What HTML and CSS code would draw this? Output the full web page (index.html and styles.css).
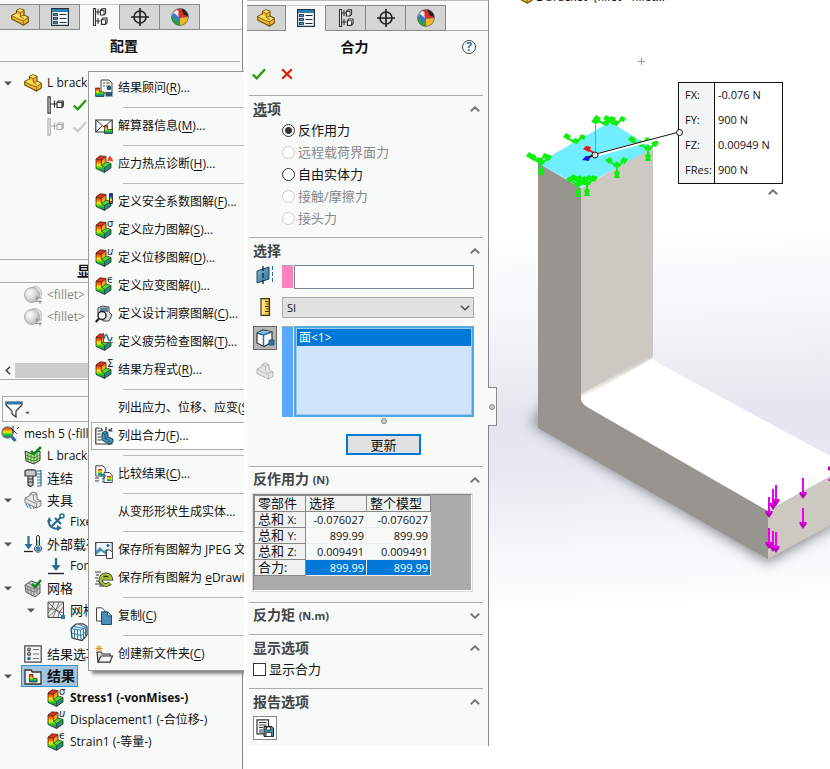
FILE: index.html
```html
<!DOCTYPE html>
<html lang="zh-CN">
<head>
<meta charset="utf-8">
<title>L bracket</title>
<link rel="stylesheet" href="styles.css">
</head>
<body>
<svg class="defs" aria-hidden="true">
  <defs>
    <linearGradient id="rain" x1="0" y1="0" x2="0" y2="1">
      <stop offset="0" stop-color="#f01010"/><stop offset=".25" stop-color="#ff7a00"/><stop offset=".45" stop-color="#f8f000"/><stop offset=".7" stop-color="#18c820"/><stop offset="1" stop-color="#1060e0"/>
    </linearGradient>
    <linearGradient id="warm" x1="0" y1="0" x2="0" y2="1"><stop offset="0" stop-color="#f05010"/><stop offset="1" stop-color="#f8f020"/></linearGradient>
    <linearGradient id="cool" x1="0" y1="0" x2="0" y2="1"><stop offset="0" stop-color="#18b828"/><stop offset="1" stop-color="#1868e0"/></linearGradient>
    <linearGradient id="ruler" x1="0" y1="0" x2="1" y2="0"><stop offset="0" stop-color="#fff3a0"/><stop offset="1" stop-color="#f0b818"/></linearGradient>
    <linearGradient id="plane" x1="0" y1="0" x2="1" y2="1"><stop offset="0" stop-color="#7db7d8"/><stop offset="1" stop-color="#2c7299"/></linearGradient>
    <radialGradient id="ball" cx=".35" cy=".35" r=".7"><stop offset="0" stop-color="#fff"/><stop offset="1" stop-color="#b8b8b8"/></radialGradient>
    <symbol id="part" viewBox="0 0 18 18">
      <path d="M.7 7.500 5.500 5V2.500L9 .7l4 1.600V7l4.300 2.300V14l-5 3.300L8.500 15 .7 11z" fill="#f0bd28" stroke="#6b4a10" stroke-width="1.100" stroke-linejoin="round"/>
      <path d="M5.800 2.600 9 1l3.700 1.500L9.300 4.500zM1.200 7.600 5.500 5.400l3 1.800 4.200.2 4.100 2L12.500 12z" fill="#ffe25e"/>
      <path d="M5.700 2.800 9.300 4.700V8.500l3.500 2M1 7.800l4.500 2.600 3 1.200 3.800 1.200 5-3.200M12.300 12.800V17M9.300 4.700 13 2.600M9.300 8.500 13 7" fill="none" stroke="#80591a" stroke-width=".9"/>
    </symbol>
    <symbol id="props" viewBox="0 0 18 18">
      <rect x=".6" y=".6" width="16.800" height="16.800" fill="#f7f9fa" stroke="#20313c" stroke-width="1.200"/><rect x="1" y="1" width="16" height="3" fill="#2f7fae"/>
      <g fill="#4c91b8" stroke="#20313c" stroke-width=".8"><rect x="2.500" y="5.500" width="4" height="2.200"/><rect x="2.500" y="9.500" width="4" height="2.200"/><rect x="2.500" y="13.500" width="4" height="2.200"/></g>
      <path d="M8.500 6.500h7M8.500 10.500h7M8.500 14.500h7" stroke="#20313c" stroke-width="1.200"/>
    </symbol>
    <symbol id="config" viewBox="0 0 18 18">
      <path d="M2.500.5h2v17h-2zM4.500 4h2.500M4.500 13h2.500M7 1v6M7 10v6M7 4h2.500M7 13h2.500" fill="#fff" stroke="#333" stroke-width="1.100"/>
      <path d="M9.500 2.500 11 .8h3.500v4.500L13 7H9.500zM10.500 11.700 12 10h4v4.500l-1.500 1.800h-4z" fill="#fff" stroke="#333" stroke-width="1.200"/><path d="M9.500 2.500H13V7M10.500 11.700h4v4.600" fill="none" stroke="#333" stroke-width=".9"/>
    </symbol>
    <symbol id="branch" viewBox="0 0 18 18">
      <path d="M1 .8h2.200v16.400H1zM3.200 8h4M7.500 4.500v7M7.500 8H10" fill="none" stroke="currentColor" stroke-width="1.200"/><path d="M10 6.500h5v5h-5zM10 6.500 11.500 5h4.800v4.800L15 11.500" fill="none" stroke="currentColor" stroke-width="1.200"/>
    </symbol>
    <symbol id="target" viewBox="0 0 18 18"><circle cx="9" cy="9" r="6" fill="none" stroke="#222" stroke-width="1.600"/><path d="M9 0v18M0 9h18" stroke="#222" stroke-width="1.700"/></symbol>
    <symbol id="sphere" viewBox="0 0 18 18">
      <circle cx="9" cy="9" r="8.500" fill="#2d7dd0"/><path d="M9 10 2 7 5 1.500 9 .5l8.500 8z" fill="#e03024"/><path d="M2 4.500 6 1.200 8 9 .8 8z" fill="#dfe3e6"/><path d="M10 .6c4 .6 7 3.400 7.400 7.400L13 7z" fill="#222"/><path d="M.6 8 9 10v7.500A8.500 8.500 0 0 1 .6 8z" fill="#28a43a"/><path d="m9 10 8.500-1A8.500 8.500 0 0 1 9 17.500z" fill="#f0b820"/><path d="M.7 8 3 5l6 5-1 4z" fill="#3a79cf"/><circle cx="6" cy="4.500" r="2" fill="#fff" opacity=".6"/><circle cx="9" cy="9" r="8.400" fill="none" stroke="#555" stroke-width=".6"/>
    </symbol>
    <symbol id="fea" viewBox="0 0 18 18">
      <path d="M1 4 6.500 5.200v5.300l3 2v5L1 13.500z" fill="url(#rain)"/>
      <path d="M1 4 5 .8l6 .7-4.500 3.700z" fill="#f02818"/>
      <path d="M6.500 5.200 11 1.500V7l-4.500 3.500z" fill="url(#warm)"/>
      <path d="M6.500 10.500 11 7l5 1.500-6.500 4z" fill="#48e040"/>
      <path d="m9.500 12.500 6.500-4V13l-6.500 4.500z" fill="url(#cool)"/>
      <path d="M1 4 5 .8l6 .7V7l5 1.500V13l-6.500 4.500L1 13.500zM1 4l5.500 1.200L11 1.500M6.500 5.200v5.300l3 2v5M6.500 10.500 11 7M9.500 12.500l6.500-4" fill="none" stroke="#33301c" stroke-width=".8" stroke-linejoin="round"/>
    </symbol>
    <symbol id="fea-bit" viewBox="0 0 9 9"><path d="M.5.5h3v4h5v4h-8z" fill="url(#rain)" stroke="#333" stroke-width=".8"/></symbol>
    <symbol id="tick" viewBox="0 0 14 12"><path d="m.8 6.500 4 3.800L13 1.200" fill="none" stroke="currentColor" stroke-width="2.400"/></symbol>
    <symbol id="up" viewBox="0 0 10 6"><path d="m.8 5.200 4.200-4 4.200 4" fill="none" stroke="currentColor" stroke-width="2"/></symbol>
    <symbol id="down" viewBox="0 0 10 6"><path d="m.8.8 4.200 4 4.200-4" fill="none" stroke="currentColor" stroke-width="2"/></symbol>
    <symbol id="twisty" viewBox="0 0 8 5"><path d="M0 .5h8L4 4.500z" fill="#555"/></symbol>
    <symbol id="fillet" viewBox="0 0 18 18"><circle cx="11" cy="7" r="6.500" fill="#e3e3e3" stroke="#bbb"/><circle cx="8" cy="9" r="7.500" fill="url(#ball)" stroke="#aaa"/><path d="M11 12h7M11 15.500h7M13 10v4M16 14v4" stroke="#999" stroke-width="1.200"/></symbol>
    <symbol id="greymesh" viewBox="0 0 18 18"><path d="M1 6 7 2l9 3v9l-5 4-9-5z" fill="#ccc" stroke="#555"/><path d="m1 6 9 4v7M10 10l6-5M4 4l9 4v7M1 9l9 4 6-4M4 7.500v6.500M7 9v7" fill="none" stroke="#666" stroke-width=".8"/><path d="m8 5 3 3 6-7" fill="none" stroke="#138a20" stroke-width="2.600"/></symbol>
    <symbol id="arrowdown" viewBox="0 0 18 18"><path d="M9 1v9" stroke="#2b6d96" stroke-width="2.400"/><path d="M4.500 8h9L9 14z" fill="#2b6d96"/><path d="M1 16.500h16" stroke="#222" stroke-width="1.400"/></symbol>
    <symbol id="solid" viewBox="0 0 18 18"><path d="M1 7 6 4.500V2.500L9 1l4 1.500V8l4 2v4.500L12.500 17 1 11.500z" fill="#e6e6e6" stroke="currentColor"/><path d="M6 2.800 9.500 4.500V9l3 2 4.500-1M1 7l5 3 6.500 2.500V17M9.500 4.500 13 2.800" fill="none" stroke="currentColor" stroke-width=".8"/></symbol>
    <symbol id="folder" viewBox="0 0 18 18"><path d="M1 3h6l1.500 2H17v12H1z" fill="#f2f2f2" stroke="#333" stroke-width="1.300"/><path d="M5.500 7.500h3.500v4h4v3.500H5.500z" fill="url(#rain)" stroke="#333" stroke-width=".8"/></symbol>
  </defs>
</svg>

<main class="app">
  <aside class="tree-panel">
    <nav class="tabs" aria-label="管理器">
      <button class="tab" aria-label="特征树"><svg class="ico"><use href="#part"/></svg></button>
      <button class="tab" aria-label="属性"><svg class="ico"><use href="#props"/></svg></button>
      <button class="tab active" aria-label="配置"><svg class="ico"><use href="#config"/></svg></button>
      <button class="tab" aria-label="尺寸"><svg class="ico"><use href="#target"/></svg></button>
      <button class="tab" aria-label="外观"><svg class="ico"><use href="#sphere"/></svg></button>
    </nav>
    <h1 class="tree-title">配置</h1>
    <ul class="tree config-tree">
      <li class="row l1"><svg class="twisty"><use href="#twisty"/></svg><svg class="ico"><use href="#part"/></svg><span>L bracket</span></li>
      <li class="row l2"><span class="twisty"></span><svg class="ico dark"><use href="#branch"/></svg><svg class="tick green"><use href="#tick"/></svg></li>
      <li class="row l2"><span class="twisty"></span><svg class="ico pale"><use href="#branch"/></svg><svg class="tick faint"><use href="#tick"/></svg></li>
    </ul>
    <h2 class="state-title">显示状态</h2>
    <ul class="tree state-tree">
      <li class="row l1 muted"><span class="twisty"></span><svg class="ico"><use href="#fillet"/></svg><span>&lt;fillet&gt;</span></li>
      <li class="row l1 muted"><span class="twisty"></span><svg class="ico"><use href="#fillet"/></svg><span>&lt;fillet&gt;</span></li>
    </ul>
    <div class="hscroll"><button class="scroll-left" aria-label="向左"><svg viewBox="0 0 6 9"><path d="M5 .8 1.300 4.500 5 8.200" fill="none" stroke="#444" stroke-width="1.600"/></svg></button><div class="thumb"></div></div>
    <div class="filter">
      <button class="filter-btn" aria-label="过滤"><svg class="ico" viewBox="0 0 18 18"><path d="M1 2h16v3l-6 6v6l-4-3v-3L1 5z" fill="#fff" stroke="#333" stroke-width="1.200"/><path d="M1 2h16v2.500H1z" fill="#2b79a8"/></svg><svg class="drop"><use href="#twisty"/></svg></button>
    </div>
    <ul class="tree study-tree">
      <li class="row l0"><svg class="ico" viewBox="0 0 18 18"><path d="m10 11 4.500 5" stroke="#2b6d96" stroke-width="3"/><circle cx="6.500" cy="7.500" r="5.500" fill="url(#rain)" stroke="#777" stroke-width="1.400"/><path d="M10 3l6 6M12 8V1M16 4l2-2" stroke="#333" stroke-width="1"/></svg><span>mesh 5 (-fillet-)</span></li>
      <li class="row l1"><span class="twisty"></span><svg class="ico" viewBox="0 0 18 18"><path d="m1 4 7 3 8-3v9l-6 4-8-3z" fill="#b8ef9c" stroke="#333"/><path d="M1.500 8 10 11l6-3M1.500 11 10 14l6-3M4 5.500V15M7 7v9M10 7v10M13 5.500V15" fill="none" stroke="#3d7f2a" stroke-width=".9"/><path d="m7 4 3 3 7-7" fill="none" stroke="#138a20" stroke-width="2.600"/></svg><span>L bracket</span></li>
      <li class="row l1"><span class="twisty"></span><svg class="ico" viewBox="0 0 18 18"><path d="M1 2 3 .8h7L12 2v5H1zM4 7h5v9l-2.500 1.500L4 16z" fill="#c9c9c9" stroke="#333" stroke-width="1.200"/><path d="M4 10h5M4 13h5" stroke="#333"/><path d="M13 2h4M13 5h4M13 8h4M13 11h4M13 14h4M13 17h4M17 1v16" stroke="#2b6d96" stroke-width="1.200"/></svg><span class="zh">连结</span></li>
      <li class="row l1"><svg class="twisty"><use href="#twisty"/></svg><svg class="ico grey"><use href="#solid"/><path d="m2 13 2 4M5 14l2 4M9 16l1 2" stroke="#2b6d96"/></svg><span class="zh">夹具</span></li>
      <li class="row l2"><span class="twisty"></span><svg class="ico" viewBox="0 0 18 18"><path d="M5 13 14 4M8 5l6 6M2 7c-1 6 4 10 10 8" fill="none" stroke="#2b6d96" stroke-width="2.200"/><circle cx="15" cy="3" r="2" fill="none" stroke="#2b6d96" stroke-width="1.600"/><path d="M0 9l2-5 3 4zM10 12l5 3-5 3z" fill="#2b6d96"/></svg><span>Fixed-1</span></li>
      <li class="row l1"><svg class="twisty"><use href="#twisty"/></svg><svg class="ico" viewBox="0 0 18 18"><path d="M4.500 1v10" stroke="#2b6d96" stroke-width="2.200"/><path d="M.5 9h8l-4 5.500z" fill="#2b6d96"/><path d="M0 16.500h9" stroke="#222" stroke-width="1.300"/><path d="M12.500 2a1.500 1.500 0 0 1 3 0v8.500a3.500 3.500 0 1 1-3 0z" fill="#fff" stroke="#333"/><circle cx="14" cy="13.800" r="2.500" fill="#3886b5"/><path d="M14 5v8" stroke="#3886b5"/></svg><span class="zh">外部载荷</span></li>
      <li class="row l2"><span class="twisty"></span><svg class="ico"><use href="#arrowdown"/></svg><span>Force-1</span></li>
      <li class="row l1"><svg class="twisty"><use href="#twisty"/></svg><svg class="ico"><use href="#greymesh"/></svg><span class="zh">网格</span></li>
      <li class="row l2"><svg class="twisty"><use href="#twisty"/></svg><svg class="ico" viewBox="0 0 18 18"><path d="M1 1h15.500v15.500H1z" fill="#eee" stroke="#444"/><path d="m1 1 15.500 15.500M16.500 1 1 16.500M1 7l8 2 3-8M9 9l7 3M9 9l-3 7.500M1 12l4-5 2-6M16 6l-4 6-1 4" fill="none" stroke="#555" stroke-width=".8"/><path d="M14 14h4v4h-4z" fill="#2b79a8"/></svg><span class="zh">网格控制</span></li>
      <li class="row l3"><span class="twisty"></span><svg class="ico" viewBox="0 0 18 18"><path d="M1 5.500 6 1l7-.2 4 2.700V12l-5 5.500L2 15z" fill="#e4f1f8" stroke="#333" stroke-width="1.200"/><path d="m1 5.500 9.500 1.700L17 3.500M10.500 7.200 11 17M1.500 10l9.500 2.500 6-4.500M4.500 6v9.500M7.500 7v9.500M4 3.500l9.500 2v10M8 1l7.500 3.500V14" fill="none" stroke="#3580ab" stroke-width="1"/></svg></li>
      <li class="row l1"><span class="twisty"></span><svg class="ico" viewBox="0 0 18 18"><path d="M.8.8h16.400v16.400H.8z" fill="#f4f4f4" stroke="#444" stroke-width="1.200"/><circle cx="5" cy="4.500" r="1.600" fill="#999" stroke="#555"/><circle cx="5" cy="9" r="1.600" fill="#999" stroke="#555"/><circle cx="5" cy="13.500" r="1.800" fill="#2b6d96"/><path d="M9 4.500h6M9 9h6M9 13.500h6" stroke="#777" stroke-width="1.200"/></svg><span class="zh">结果选项</span></li>
      <li class="row l1"><svg class="twisty"><use href="#twisty"/></svg><span class="selected"><svg class="ico"><use href="#folder"/></svg><b>结果</b></span></li>
      <li class="row l2"><span class="twisty"></span><svg class="ico"><use href="#fea"/><text x="12" y="6" class="sup">σ</text></svg><b>Stress1 (-vonMises-)</b></li>
      <li class="row l2"><span class="twisty"></span><svg class="ico"><use href="#fea"/><text x="12" y="6" class="sup it">u</text></svg><span>Displacement1 (-合位移-)</span></li>
      <li class="row l2"><span class="twisty"></span><svg class="ico"><use href="#fea"/><text x="12" y="6" class="sup">ϵ</text></svg><span>Strain1 (-等量-)</span></li>
    </ul>

    <div class="menu" role="menu">
      <button class="item" role="menuitem"><svg class="ico" viewBox="0 0 18 18"><path d="M6 1h8l3 3v10H6z" fill="#f5f5f5" stroke="#444"/><path d="M8 4h2M11 4h4M8 7h2M11 7h4" stroke="#555"/><path d="M.6 9h4v4H9v4.500H.6z" fill="url(#rain)" stroke="#333" stroke-width=".8"/><circle cx="14" cy="9" r="2.300" fill="#2a5673"/><path d="M10.500 17.500V13h7v4.500z" fill="#2a5673"/></svg><span>结果顾问(<u>R</u>)...</span></button>
      <hr>
      <button class="item" role="menuitem"><svg class="ico" viewBox="0 0 18 18"><path d="M.8 3h16.400v12H.8z" fill="#fff" stroke="#333" stroke-width="1.200"/><path d="m1 3 8 7 8-7M1 15l6-6" fill="none" stroke="#333"/><use href="#fea-bit" x="9" y="8" width="9" height="9"/></svg><span>解算器信息(<u>M</u>)...</span></button>
      <hr>
      <button class="item" role="menuitem"><svg class="ico"><use href="#fea"/><path d="M13 7c-1.500-3 1-4 1.500-6.500 1.500 2 4.500 3.500 3 6.500-1.500-1.500-3-2-4.500 0z" fill="#f04818"/></svg><span>应力热点诊断(<u>H</u>)...</span></button>
      <hr>
      <button class="item" role="menuitem"><svg class="ico"><use href="#fea"/><path d="M14.500.5h3v10h-3z" fill="#1838d0" stroke="#222" stroke-width=".8"/><path d="M15 4h2v2h-2z" fill="#28c838"/><path d="M15 6h2v2h-2z" fill="#f0e010"/><path d="M15 8h2v2h-2z" fill="#e82018"/></svg><span>定义安全系数图解(<u>F</u>)...</span></button>
      <button class="item" role="menuitem"><svg class="ico"><use href="#fea"/><text x="12" y="6" class="sup">σ</text></svg><span>定义应力图解(<u>S</u>)...</span></button>
      <button class="item" role="menuitem"><svg class="ico"><use href="#fea"/><text x="12" y="6" class="sup it">u</text></svg><span>定义位移图解(<u>D</u>)...</span></button>
      <button class="item" role="menuitem"><svg class="ico"><use href="#fea"/><text x="12" y="6" class="sup">ϵ</text></svg><span>定义应变图解(<u>I</u>)...</span></button>
      <button class="item" role="menuitem"><svg class="ico" viewBox="0 0 18 18"><path d="m3 3 4-2 7 1v5l3 3-3 6H8L3 9z" fill="#ddd" stroke="#444"/><path d="M5 2.500h8V7H5z" fill="#5b8199"/><circle cx="7" cy="10.500" r="4" fill="#f5f8fa" stroke="#222" stroke-width="1.500"/><path d="M4 13.500.8 17" stroke="#222" stroke-width="2.200"/></svg><span>定义设计洞察图解(<u>C</u>)...</span></button>
      <button class="item" role="menuitem"><svg class="ico"><use href="#fea"/><path d="M8.500 0H18v9.500H8.500z" fill="#f8faf9"/><path d="M8.500 0v9.500H18" fill="none" stroke="#555"/><path d="M9 6c1-6 3-5 4-1s3 4 4-1" fill="none" stroke="#2b6d96" stroke-width="1.400"/></svg><span>定义疲劳检查图解(<u>T</u>)...</span></button>
      <button class="item" role="menuitem"><svg class="ico"><use href="#fea"/><text x="12" y="6" class="sup">Σ</text></svg><span>结果方程式(<u>R</u>)...</span></button>
      <hr>
      <button class="item" role="menuitem"><span class="ico"></span><span>列出应力、位移、应变(<u>S</u>)...</span></button>
      <button class="item hot" role="menuitem"><svg class="ico" viewBox="0 0 18 18"><path d="M.8 1h4M.8 1v16h16v-3" fill="none" stroke="#333" stroke-width="1.200"/><path d="M2.500 4h4M2.500 7h3M2.500 10h4M2.500 13h4" stroke="#333" stroke-width="1.200"/><path d="m7 6 3-2 3 1.500V10l5 2v3l-4 2.500L7 13z" fill="#4a8fb5" stroke="#1d4a66"/><path d="m7 6 3 1.500v4l4 2V17M10 11.500l3-1.500M10 7.500 13 5.500" fill="none" stroke="#1d4a66" stroke-width=".8"/><path d="m6 1 1.500 3M11 0v3.500M17 1l-2 3M14 4.500l.3-2.500M17.500 4H15" stroke="#222" stroke-width="1.200"/></svg><span>列出合力(<u>F</u>)...</span></button>
      <hr>
      <button class="item" role="menuitem"><svg class="ico" viewBox="0 0 18 18"><path d="M.8.8h7l2.500 2.500V11H.8z" fill="#fff" stroke="#444"/><path d="M9 7.500h5.500L17.200 10v7.500H9z" fill="#fff" stroke="#444"/><path d="M3 4h4v6H3z" fill="url(#rain)"/><path d="M12 11h4v5h-4z" fill="url(#rain)"/><path d="M6 11.500q0-2 2-2t2 1.700q0 1.300-2 2.300v1M8 16v1.500" fill="none" stroke="#2b6d96" stroke-width="1.500"/><path d="M0 13h4M0 16h4" stroke="#333" stroke-width="1.200"/></svg><span>比较结果(<u>C</u>)...</span></button>
      <hr>
      <button class="item" role="menuitem"><span class="ico"></span><span>从变形形状生成实体...</span></button>
      <hr>
      <button class="item" role="menuitem"><svg class="ico" viewBox="0 0 18 18"><path d="M.7 1.500h16.600v13H.7z" fill="#eef5fa" stroke="#444" stroke-width="1.200"/><path d="m1 10 4-4 4 4 3-2 5 3v3H1z" fill="#4b8fb4"/><path d="m1 14 5-4 5 4z" fill="#fff"/><circle cx="13" cy="4.500" r="1.500" fill="#2b6d96"/><path d="M11.500 9H15l2.500 2.500v6h-6z" fill="#fff" stroke="#444"/></svg><span>保存所有图解为 JPEG 文件(<u>J</u>)</span></button>
      <button class="item" role="menuitem"><svg class="ico" viewBox="0 0 18 18"><path d="M0 3h6M1 6h3M0 9h3M1 12h3M0 15h6M4 17h5" stroke="#333" stroke-width="1"/><path d="M7 9.500h9A5.300 5.300 0 1 0 15 14" fill="none" stroke="#333" stroke-width="4"/><path d="M7 9.500h9A5.300 5.300 0 1 0 15 14" fill="none" stroke="#a5c63b" stroke-width="2.400"/></svg><span>保存所有图解为 <u>e</u>Drawings</span></button>
      <hr>
      <button class="item" role="menuitem"><svg class="ico" viewBox="0 0 18 18"><path d="M1.500.8H7l3 3V14H1.500z" fill="#fff" stroke="#444"/><path d="M6.500 4.800h6l4 4v8.700h-10z" fill="#4a8fb5" stroke="#1d4a66"/><path d="M12.500 4.800v4h4z" fill="#cfe4f1" stroke="#1d4a66" stroke-width=".8"/></svg><span>复制(<u>C</u>)</span></button>
      <hr>
      <button class="item" role="menuitem"><svg class="ico" viewBox="0 0 18 18"><path d="M2 7h4l1.500 2H15v8H3z" fill="#ddd" stroke="#333" stroke-width="1.200"/><path d="m3 17 3-6h11.500L15 17z" fill="#f6f6f6" stroke="#333" stroke-width="1.200"/><path d="M4 0v7M.5 3.500h7M1.500 1l5 5M6.500 1l-5 5" stroke="#e09010" stroke-width="1"/></svg><span>创建新文件夹(<u>C</u>)</span></button>
    </div>
  </aside>

  <section class="property">
    <nav class="tabs" aria-label="管理器">
      <button class="tab" aria-label="特征树"><svg class="ico"><use href="#part"/></svg></button>
      <button class="tab active" aria-label="属性"><svg class="ico"><use href="#props"/></svg></button>
      <button class="tab" aria-label="配置"><svg class="ico"><use href="#config"/></svg></button>
      <button class="tab" aria-label="尺寸"><svg class="ico"><use href="#target"/></svg></button>
      <button class="tab" aria-label="外观"><svg class="ico"><use href="#sphere"/></svg></button>
    </nav>
    <header class="prop-head">
      <h1>合力</h1>
      <button class="help" aria-label="帮助">?</button>
    </header>
    <div class="confirm">
      <button aria-label="确定"><svg class="tick green"><use href="#tick"/></svg></button>
      <button aria-label="取消"><svg class="cross" viewBox="0 0 12 12"><path d="m1.200 1.200 9.600 9.600M10.800 1.200 1.200 10.800" stroke="#d81e06" stroke-width="2.200"/></svg></button>
    </div>

    <section class="group options" role="radiogroup" aria-labelledby="options-title">
      <h2 id="options-title"><span><u>选</u>项</span><svg class="chev"><use href="#up"/></svg></h2>
      <label><input type="radio" name="force" checked>反作用力</label>
      <label><input type="radio" name="force" disabled>远程载荷界面力</label>
      <label><input type="radio" name="force">自由实体力</label>
      <label><input type="radio" name="force" disabled>接触/摩擦力</label>
      <label><input type="radio" name="force" disabled>接头力</label>
    </section>

    <section class="group selection">
      <h2><span>选择</span><svg class="chev"><use href="#up"/></svg></h2>
      <div class="field">
        <svg class="ico" viewBox="0 0 18 18"><path d="m1 5 12-4v12L1 17z" fill="url(#plane)" stroke="#1d4a66"/><path d="M7 0v18" stroke="#222" stroke-width="1.300" stroke-dasharray="5 2"/><path d="M16.500 0v18" stroke="#2b6d96" stroke-dasharray="4 2"/></svg>
        <div class="swatched pink"><i></i><input type="text" aria-label="参考基准面"></div>
      </div>
      <div class="field units">
        <svg class="ico" viewBox="0 0 18 18"><path d="M5 .7h8.500v16.600H5z" fill="url(#ruler)" stroke="#40300a" stroke-width="1.200"/><path d="M9 3.500h4M10.500 6h3M9 8.500h4M10.500 11h3M9 13.500h4" stroke="#40300a" stroke-width="1.200"/></svg>
        <div class="dropdown"><select aria-label="单位"><option>SI</option></select><svg class="arrow" viewBox="0 0 10 6"><path d="m.8.8 4.200 4 4.200-4" fill="none" stroke="#444" stroke-width="1.300"/></svg></div>
      </div>
      <div class="field faces">
        <div class="pick">
          <button class="square on" aria-label="面"><svg class="ico" viewBox="0 0 18 18"><path d="m1 4 6-3 9 2v10l-8 4.500L1 14z" fill="#fff" stroke="#333" stroke-width="1.200"/><path d="m1.500 4 5.500-2.500L15.500 3 8 6z" fill="#7cc4e8"/><path d="m1 4 6.500 2L16 3M7.500 6v11" fill="none" stroke="#2b6d96" stroke-width="1.500"/><path d="M13 11h5v5h-5z" fill="#2b79a8" stroke="#1d4a66" stroke-width=".8"/></svg></button>
          <svg class="ico pale solid"><use href="#solid"/></svg>
        </div>
        <div class="swatched blue"><i></i><select size="4" aria-label="面"><option selected>面&lt;1&gt;</option></select></div>
      </div>
      <div class="grip"></div>
      <button class="update">更新</button>
    </section>

    <section class="group reaction">
      <h2><span>反作用力 <small>(N)</small></span><svg class="chev"><use href="#up"/></svg></h2>
      <div class="sheet">
        <table>
          <thead><tr><th>零部件</th><th>选择</th><th>整个模型</th></tr></thead>
          <tbody>
            <tr><th>总和 <small>X:</small></th><td>-0.076027</td><td>-0.076027</td></tr>
            <tr><th>总和 <small>Y:</small></th><td>899.99</td><td>899.99</td></tr>
            <tr><th>总和 <small>Z:</small></th><td>0.009491</td><td>0.009491</td></tr>
            <tr class="sum"><th>合力:</th><td>899.99</td><td>899.99</td></tr>
          </tbody>
        </table>
      </div>
    </section>
    <section class="group moment"><h2><span>反力矩 <small>(N.m)</small></span><svg class="chev"><use href="#down"/></svg></h2></section>
    <section class="group display">
      <h2><span>显示选项</span><svg class="chev"><use href="#up"/></svg></h2>
      <label><input type="checkbox">显示合力</label>
    </section>
    <section class="group report">
      <h2><span>报告选项</span><svg class="chev"><use href="#up"/></svg></h2>
      <button class="square" aria-label="保存报告"><svg class="ico" viewBox="0 0 18 18"><path d="M1 .8h11.500v14H1z" fill="#fff" stroke="#333" stroke-width="1.200"/><path d="M3 3.500h7.500M3 6h7.500M3 8.500h4M3 11h4M3 13h4" stroke="#333"/><path d="M8 7.500h8l1.500 1.500v8.500H8z" fill="#4a8fb5" stroke="#222"/><path d="M10.500 8h4v3h-4zM10 13.500h5.500v4H10z" fill="#fff" stroke="#222" stroke-width=".8"/></svg></button>
    </section>
    <button class="handle" aria-label="折叠面板"><i></i></button>
  </section>

  <section class="viewport">
    <svg class="scene" aria-label="L bracket">
      <defs>
        <filter id="soft" x="-20%" y="-20%" width="140%" height="140%"><feGaussianBlur stdDeviation="7"/></filter>
        <linearGradient id="bend" gradientUnits="userSpaceOnUse" x1="126" y1="374" x2="129" y2="380"><stop offset="0" stop-color="#cdc8c2"/><stop offset="1" stop-color="#fff"/></linearGradient>
        <g id="load"><path d="M0 0v16" stroke="#f000f0" stroke-width="2"/><path d="M-3.500 14h7v2L0 21l-3.500-5z" fill="#b800b8"/><path d="M-2 14h4v2h-4z" fill="#f000f0"/></g>
        <g id="fix" fill="#0af00a" stroke="#0af00a"><path d="m-8-4 8 5 8-5M0 0v11" fill="none" stroke-width="2"/><path d="m-12-5 5-3 3 3-4 4zM11-6l-5-2-3 4 5 3zM-4 1l4-5 4 5-4 2zM-3 8l3-4 3 4-1 2 1 3h-6l1-3z" stroke="none"/></g>
        <g id="fixtop" fill="#0af00a" stroke="#0af00a"><path d="m-8-3 8 4 8-5" fill="none" stroke-width="2"/><path d="m-12-4 3-4 5 3-3 4zM11-5 6-7 4-3l5 2zM-4 1l4-4 5 2-3 4z" stroke="none"/></g>
      </defs>
      <path d="M42 423 279 562 345 525V500L80 380z" fill="#55565c" filter="url(#soft)" opacity=".75"/>
      <path d="M49 163 92 188V399q1 5 6 8l181 103v49L49 428z" fill="#989590"/>
      <path d="M92 188 164 147V357L92 399z" fill="#cdc8c2"/>
      <path d="M92 399 164 356q1 4 5 7L345 458V474L279 511 98 407q-6-4-6-8z" fill="#fff"/>
      <path d="M92 394 164 353v5L92 400z" fill="url(#bend)"/>
      <path d="M279 511 345 474V523L279 559z" fill="#cdc8c2"/>
      <path d="M49 163 121 122 164 148 92 187z" fill="#70edff"/>
      <use href="#fixtop" x="86" y="141"/><use href="#fixtop" x="116" y="123"/><use href="#fixtop" x="126" y="123"/>
      <use href="#fix" x="52" y="162"/><use href="#fix" x="89" y="184"/><use href="#fix" x="98" y="183"/><use href="#fix" x="128" y="165"/><use href="#fix" x="159" y="148"/><use href="#fixtop" x="49" y="160"/><use href="#fixtop" x="151" y="144"/><use href="#fixtop" x="93" y="182"/>
      <path d="M106.500 120v34" stroke="#0af00a"/><path d="m102 122 4.500-6 4.500 6-4 2z" fill="#0af00a"/>
      <path d="M107 154 98 149" stroke="#e11" stroke-width="2"/><path d="m94 149 3-3 5 1-2 5z" fill="#f01010"/>
      <path d="m107 154-9 4" stroke="#222" stroke-width="2"/><path d="m93 160 4-4 4 1-1 4z" fill="#1818e0"/>
      <path d="M107 155 190 133" stroke="#fff" stroke-width="3"/><path d="M107 154 190 132" stroke="#111"/>
      <circle cx="106" cy="155" r="3" fill="#ddd" stroke="#222"/>
      <use href="#load" x="280" y="497"/><use href="#load" x="284" y="489"/><use href="#load" x="287" y="485"/><use href="#load" x="314" y="478"/><use href="#load" x="280" y="528"/><use href="#load" x="284" y="531"/><use href="#load" x="287" y="532"/><use href="#load" x="314" y="508"/>
      <path d="m339 467 3-1v5l-3-1zM339 480l3-2v4z" fill="#c000c0"/>
      <path d="M149 61.500h7M152.500 58v7" stroke="#999"/>
    </svg>
    <p class="crumb"><svg class="ico"><use href="#part"/></svg><span>L bracket&nbsp; (fillet - fillet...</span></p>
    <table class="callout">
      <tr><th>FX:</th><td>-0.076 N</td></tr>
      <tr><th>FY:</th><td>900 N</td></tr>
      <tr><th>FZ:</th><td>0.00949 N</td></tr>
      <tr><th>FRes:</th><td>900 N</td></tr>
    </table>
    <i class="anchor"></i>
    <svg class="chev collapse"><use href="#up"/></svg>
  </section>
</main>
</body>
</html>
```
FILE: styles.css
```css
* { box-sizing: border-box; }
body {
  margin: 0;
  background: #fff;
  color: #111;
  font: 12px/22px "Open Sans", "Noto Sans CJK SC", sans-serif;
}
h1, h2, p, ul { margin: 0; padding: 0; }
ul { list-style: none; }
svg { display: block; overflow: visible; flex: none; }
button { margin: 0; padding: 0; border: 0; background: none; color: inherit; font: inherit; }
.defs { position: absolute; width: 0; height: 0; }
.ico { width: 18px; height: 18px; flex: none; }
.sup { font: 10px "DejaVu Sans", sans-serif; fill: #222; }
.it { font-style: italic; }
.dark { color: #333; }
.pale { color: #b0b0b0; }
.faint { color: #ccc; }
.grey { color: #777; }
.green { color: #2f9a10; }
.tick { width: 14px; height: 12px; }
.chev { width: 10px; height: 6px; color: #777; }

.app {
  display: grid;
  grid-template-columns: 243px 242px 1fr;
  column-gap: 4px;
  min-height: 100vh;
  overflow: hidden;
}

.tabs { display: flex; height: 26px; border-bottom: 1px solid #aaa; }
.tab {
  display: grid;
  place-items: center;
  width: 40px;
  height: 26px;
  border: 1px solid #888;
  border-left: 0;
  background: #d5d5d3;
}
.tab.active { border-color: #ccc #888 #f8faf9; background: #f8faf9; }
.property .tab:first-child { width: 39px; }

.tree-panel {
  position: relative;
  padding-top: 4px;
  border-right: 1px solid #888;
  background: #f8faf9;
}
.tree-title, .state-title { font-size: 14px; }
.tree-title { height: 32px; margin-right: 2px; padding-left: 8px; border-bottom: 1px solid #aaa; line-height: 32px; text-align: center; }
.config-tree { height: 197px; padding-top: 10px; }
.row { display: flex; align-items: center; gap: 5px; height: 22px; white-space: nowrap; }
.l0 { padding-left: 1px; }
.l1 { padding-left: 4px; }
.l2 { padding-left: 27px; }
.l3 { padding-left: 50px; }
.zh { font-size: 13px; }
span.twisty { width: 15px; }
svg.twisty { width: 8px; height: 5px; margin-right: 7px; }
.config-tree .tick { margin-left: 3px; }
.muted { color: #888; }
.state-title { height: 24px; padding-left: 77px; border: solid #aaa; border-width: 1px 0; }
.state-tree { height: 78px; padding-top: 1px; }
.hscroll { display: flex; height: 19px; align-items: center; border-bottom: 1px solid #aaa; }
.scroll-left { display: grid; place-items: center; width: 15px; }
.scroll-left svg { width: 6px; height: 9px; }
.thumb { flex: 1; height: 15px; background: #cdcdcd; }
.filter { display: flex; align-items: center; height: 26px; margin: 16px 0 1px 2px; padding-left: 2px; border: 1px solid #aaa; }
.filter-btn { display: flex; align-items: center; gap: 2px; }
.drop { width: 5px; height: 4px; margin-top: 8px; }
.selected {
  display: flex;
  align-items: center;
  gap: 5px;
  height: 22px;
  margin-left: -3px;
  padding: 0 2px;
  border: 1px solid #3c8ec8;
  background: #a2c4e0;
  font-size: 14px;
}

.menu {
  position: absolute;
  top: 71px;
  left: 88px;
  width: 156px;
  padding: 2px 0 2px 2px;
  border: 1px solid #999;
  border-right: 0;
  background: #f8faf9;
  box-shadow: 4px 3px 3px #888;
  clip-path: inset(0 0 -8px 0);
}
.item {
  display: flex;
  align-items: center;
  gap: 5px;
  width: 100%;
  height: 28px;
  padding-left: 3px;
  border: 1px solid transparent;
  border-right: 0;
  white-space: nowrap;
}
.item.hot { border-color: #aaa; background: #fff; }
.menu hr { height: 1px; margin: 5px 0 4px 32px; border: 0; background: #bbb; }
u { text-underline-offset: 2px; }

.property {
  position: relative;
  align-self: start;
  padding-top: 4px;
  border-top: 1px solid #bbb;
  border-right: 1px solid #888;
  background: #f8faf9;
}
.prop-head { display: grid; grid-template-columns: 1fr auto; align-items: center; height: 32px; padding-right: 12px; }
.prop-head h1 { font-size: 14px; text-align: center; }
.help {
  width: 14px;
  height: 14px;
  border: 1px solid #444;
  border-radius: 50%;
  color: #2b79a8;
  font-weight: bold;
  line-height: 12px;
}
.confirm { display: flex; align-items: center; gap: 15px; height: 32px; padding: 0 0 10px 5px; }
.cross { width: 12px; height: 12px; }
.group {
  margin: 0 5px 0 2px;
  padding: 2px 3px 7px 4px;
  border-top: 1px solid #aaa;
}
.group h2 { display: flex; align-items: center; justify-content: space-between; height: 21px; color: #444; font-size: 14px; }
.group h2 small { font-size: 11px; }
.group label { display: flex; align-items: center; gap: 3px; height: 22px; font-size: 13px; }
input[type="radio"], input[type="checkbox"] {
  appearance: none;
  width: 13px;
  height: 13px;
  margin: 0;
  border: 1px solid #333;
  background: #fff;
}
input[type="radio"] { border-radius: 50%; }
input[type="radio"]:checked { background: radial-gradient(circle, #333 3px, #fff 4px); }
input:disabled { border-color: #ccc; }
label:has(:disabled) { color: #888; }
.options label { padding-left: 29px; }
.options { height: 142px; }

.selection { height: 229px; }
.field { display: grid; grid-template-columns: 24px 192px; gap: 5px; justify-items: center; }
.field > :last-child { justify-self: stretch; }
.selection .field + .field { margin-top: 8px; }
.swatched { display: grid; grid-template-columns: 11px 1fr; gap: 1px; }
.swatched i { border-top: 1px solid #aaa; }
.pink i { height: 23px; background: #ff80c0; }
.blue i { background: #58a8ff; }
.field > .ico { margin-top: 5px; }
.units > .ico { margin-top: 1px; }
.swatched input { width: 100%; height: 24px; padding: 0 4px; border: 1px solid #7a839c; background: #fff; }
.pink { margin-top: 4px; }
.dropdown { display: grid; align-items: center; }
.dropdown > * { grid-area: 1 / 1; }
.dropdown select { appearance: none; width: 100%; height: 21px; padding: 0 4px; border: 1px solid #aaa; border-radius: 0; background: #e1e1e1; color: #111; font: 11px/16px "Open Sans", sans-serif; }
.arrow { justify-self: end; width: 10px; height: 6px; margin-right: 4px; pointer-events: none; }
.swatched select {
  width: 100%;
  height: 91px;
  padding: 0;
  overflow: hidden;
  border: 2px solid #50a8e0;
  outline: 1px solid #98c8ec;
  outline-offset: -3px;
  border-radius: 0;
  background: #cfe4f9;
  font: 12px/16px "Open Sans", "Noto Sans CJK SC", sans-serif;
}
.swatched option { min-height: 17px; padding: 0 3px; color: #fff; }
.swatched option:checked { background: #0078d7 linear-gradient(#0078d7, #0078d7); color: #fff; }
.square { display: grid; place-items: center; width: 24px; height: 24px; border: 1px solid #888; }
.square.on { background: #b5b5b5; border-color: #666; }
.solid { margin: 12px 3px; }
.grip { width: 6px; height: 6px; margin: 1px 0 10px 128px; border: 1px solid #888; border-radius: 50%; background: #ccc; }
.update { display: block; width: 75px; height: 21px; margin-left: 93px; border: 2px solid #0078d7; background: #e1e1e1; font-size: 13px; line-height: 16px; }

.reaction { height: 136px; }
.sheet { width: 219px; height: 97px; margin-top: 4px; border: 1px solid; border-color: #888 #fff #fff #888; outline: 1px solid #ddd; background: #ababab; }
.sheet table { border-collapse: collapse; border: 1px solid #555; font-size: 13px; line-height: 15px; background: #f8faf9; }
.sheet th { height: 16px; padding: 0 3px; border: 1px solid #888; background: #eff2f1; font-weight: normal; text-align: left; white-space: nowrap; }
.sheet thead th:nth-child(1) { width: 51px; }
.sheet thead th:nth-child(2) { width: 61px; }
.sheet thead th:nth-child(3) { width: 64px; }
.sheet td { padding: 0 2px; border: 1px solid #eee; font-size: 11px; text-align: right; }
.sheet small { font-size: 11px; }
.sheet .sum td { background: #0078d7; color: #fff; }
.moment { height: 32px; }
.display { height: 54px; }
.report { padding-bottom: 6px; }
.report .square { margin-top: 4px; background: #fff; }
.handle {
  position: absolute;
  top: 386px;
  right: -9px;
  display: grid;
  place-items: center;
  width: 9px;
  height: 39px;
  border: 1px solid #888;
  border-left: 0;
  background: #f8faf9;
  z-index: 1;
}
.handle i { width: 6px; height: 6px; border: 1px solid #888; border-radius: 50%; background: #ccc; }

.viewport {
  position: relative;
  margin-left: -4px;
  overflow: hidden;
  background: linear-gradient(178deg, #fff 230px, #f4f5f8 330px, #e3e6ee 420px, #e6e9f1 470px, #f6f7f9 550px, #fff 620px);
}
.scene { position: absolute; inset: 0; width: 100%; height: 100%; }
.crumb { position: absolute; top: -14px; left: 26px; display: flex; gap: 3px; line-height: 22px; white-space: nowrap; }
.callout {
  position: absolute;
  top: 82px;
  left: 189px;
  width: 105px;
  border: 1px solid #111;
  border-spacing: 0;
  background: #fff;
  font-size: 11px;
  line-height: 24px;
}
.callout th { width: 36px; padding: 0 0 1px 6px; border-right: 1px solid #111; background: #f3f6f5; font-weight: normal; text-align: left; }
.callout td { padding: 0 0 1px 3px; }
.anchor { position: absolute; top: 129px; left: 187px; width: 7px; height: 7px; border: 1px solid #111; border-radius: 50%; background: #fff; }
.collapse { position: absolute; top: 189px; left: 279px; }
```
